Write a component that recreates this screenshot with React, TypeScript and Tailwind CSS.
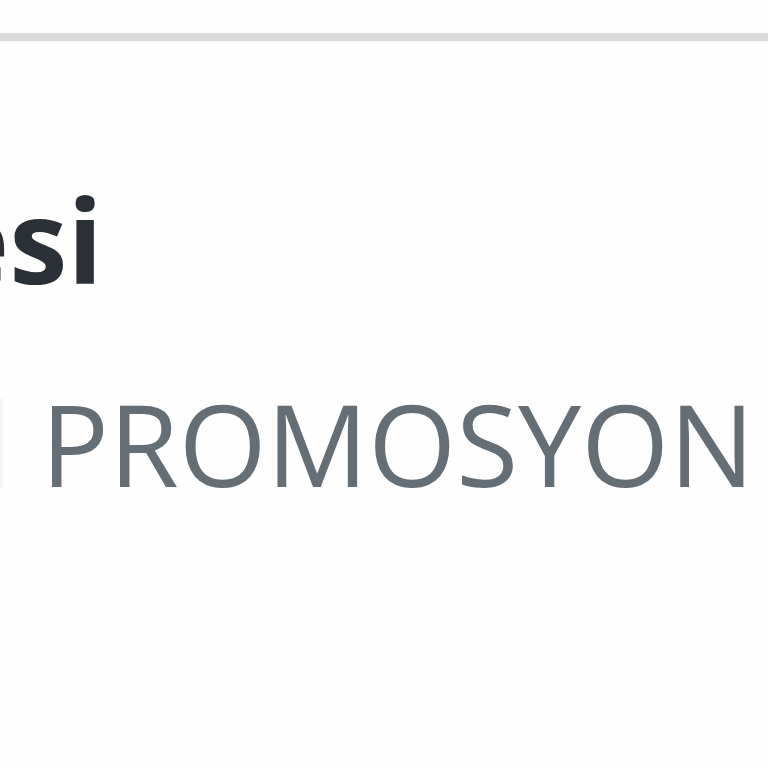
export default function App() {
  return (
    <div className="w-[768px] h-[768px] overflow-hidden bg-[#fefefe] relative" style={{ fontFamily: '"Open Sans", sans-serif' }}>
      <div className="pt-[33px]">
        <div className="h-[8px] bg-[#d8dad9]" />
      </div>
      <div className="mt-[128px] ml-[-60px] whitespace-nowrap text-[117px] leading-[140px] font-bold text-[#2b3036]">
        esi
      </div>
      <div className="mt-[64px] flex items-center whitespace-nowrap">
        <div className="w-[3px] h-[90px] bg-[#f3f6f8]" />
        <div className="ml-[38px] text-[113px] leading-[140px] text-[#656d75]">PROMOSYON</div>
      </div>
    </div>
  );
}
